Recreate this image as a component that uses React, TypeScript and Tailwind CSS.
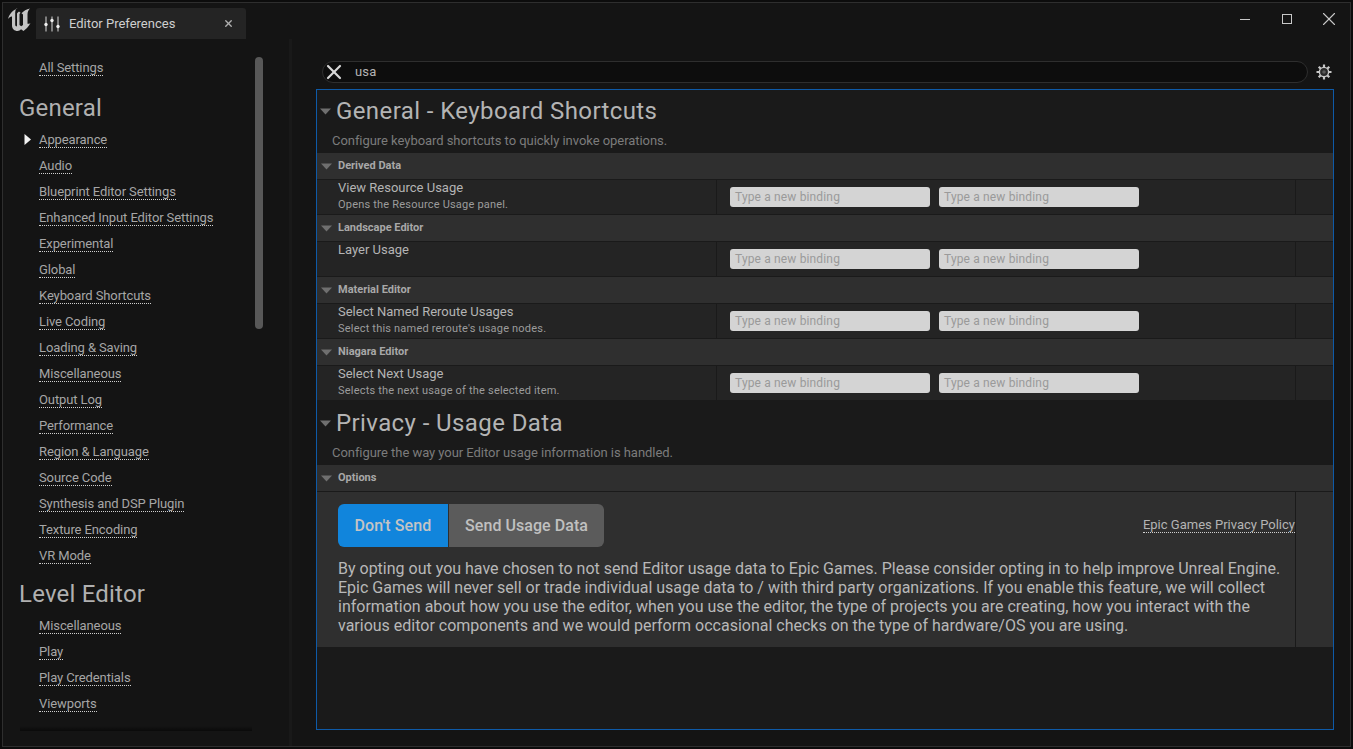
import { X } from 'lucide-react'

const generalItems = [
  'Appearance',
  'Audio',
  'Blueprint Editor Settings',
  'Enhanced Input Editor Settings',
  'Experimental',
  'Global',
  'Keyboard Shortcuts',
  'Live Coding',
  'Loading & Saving',
  'Miscellaneous',
  'Output Log',
  'Performance',
  'Region & Language',
  'Source Code',
  'Synthesis and DSP Plugin',
  'Texture Encoding',
  'VR Mode',
]

const levelItems = ['Miscellaneous', 'Play', 'Play Credentials', 'Viewports']

const shortcuts = [
  { category: 'Derived Data', name: 'View Resource Usage', desc: 'Opens the Resource Usage panel.' },
  { category: 'Landscape Editor', name: 'Layer Usage', desc: '' },
  { category: 'Material Editor', name: 'Select Named Reroute Usages', desc: "Select this named reroute's usage nodes." },
  { category: 'Niagara Editor', name: 'Select Next Usage', desc: 'Selects the next usage of the selected item.' },
]

function Caret() {
  return (
    <svg width="11" height="7" viewBox="0 0 11 7" className="shrink-0">
      <path d="M0 0.5h11L5.5 6.5z" fill="#6f6f6f" />
    </svg>
  )
}

function UnrealLogo() {
  return (
    <svg width="24" height="24" viewBox="7 7.5 24 24" className="shrink-0">
      <path
        fillRule="evenodd"
        d="M17.5 8C13 9.5 9.5 13 8 18.5c1.2-1.5 2.5-2.5 3.5-2.5h.5v9c0 3.3 2.5 5.5 5.5 5.5 1.5 0 2.5-.7 3.5-1.7l2.5 1.7 3.5-3c1.5-1.5 2.7-3.2 3.5-5-1 .8-2 1-3 .8V14c0-2.5.8-4.3 2.5-6-3.5.8-6.5 2.5-8.5 4.7l1.5 1.3v10.5l-1.8 1.3-1.7-1.3V13.5l1-1.2-1.5-1.3c-.9.7-1.6 1.3-2 2v12c0 .7-.5 1.2-1 .8-.5-.3-.8-.8-.8-1.5V12.5c0-1.8.4-3.2 1.3-4.5z"
        fill="#c4c4c4"
      />
    </svg>
  )
}

function SliderIcon() {
  return (
    <svg width="16" height="16" viewBox="0 0 16 16" className="shrink-0">
      <g stroke="#d8d8d8" strokeWidth="1">
        <path d="M2 0.5v15M8 0.5v15M14 0.5v15" />
      </g>
      <circle cx="2" cy="8.5" r="1.7" fill="#f0f0f0" />
      <circle cx="8" cy="4.5" r="1.7" fill="#f0f0f0" />
      <circle cx="14" cy="10.5" r="1.7" fill="#f0f0f0" />
    </svg>
  )
}

function GearIcon() {
  return (
    <svg width="16" height="16" viewBox="0 0 16 16" className="shrink-0">
      <g stroke="#c8c8c8" strokeWidth="2.2">
        <path d="M8 0.5v3M8 12.5v3M0.5 8h3M12.5 8h3M2.7 2.7l2.1 2.1M11.2 11.2l2.1 2.1M2.7 13.3l2.1-2.1M11.2 4.8l2.1-2.1" />
      </g>
      <circle cx="8" cy="8" r="4.6" fill="#2a2a2a" stroke="#c8c8c8" strokeWidth="1.4" />
      <circle cx="8" cy="8" r="1.8" fill="#5a5a5a" />
    </svg>
  )
}

function NavLink({ label }: { label: string }) {
  return (
    <div className="h-[26px] flex items-center pl-[36px] relative">
      {label === 'Appearance' && (
        <svg width="7" height="11" viewBox="0 0 7 11" className="absolute left-[21px] top-[7px]">
          <path d="M0.5 0v11L7 5.5z" fill="#f2f2f2" />
        </svg>
      )}
      <span className="text-[13px] leading-[14px] tracking-[-0.1px] text-[#a6a6a6] border-b border-dotted border-[#d0d0d0]">{label}</span>
    </div>
  )
}

function CategoryBar({ label }: { label: string }) {
  return (
    <div className="h-[27px] bg-[#2f2f2f] border-b border-[#1a1a1a] flex items-center pl-[4px]">
      <Caret />
      <span className="ml-[6px] text-[11px] font-bold text-[#a8a8a8]">{label}</span>
    </div>
  )
}

function BindingInput() {
  return (
    <div className="w-[200px] h-[20px] bg-[#d4d4d4] rounded-[3px] flex items-center px-[5px] text-[12px] tracking-[0.15px] text-[#9a9a9a]">
      Type a new binding
    </div>
  )
}

function ShortcutRow({ name, desc }: { name: string; desc: string }) {
  return (
    <div className="h-[35px] bg-[#242424] border-b border-[#1a1a1a] flex">
      <div className="w-[400px] shrink-0 pl-[21px] border-r border-[#1a1a1a]">
        <div className="text-[13px] leading-[15px] text-[#b4b4b4]">{name}</div>
        {desc && <div className="text-[11px] leading-[15px] tracking-[0.2px] text-[#9c9c9c] mt-[2px]">{desc}</div>}
      </div>
      <div className="w-[579px] shrink-0 flex items-center gap-[9px] pl-[13px] border-r border-[#1a1a1a]">
        <BindingInput />
        <BindingInput />
      </div>
    </div>
  )
}

function SectionHeading({ title, desc, className }: { title: string; desc: string; className?: string }) {
  return (
    <div className={`h-[63px] relative pl-[19px] ${className ?? ''}`}>
      <div className="absolute left-[3px] top-[18px]">
        <Caret />
      </div>
      <div className="text-[24px] leading-[28px] pt-[7px] tracking-[0.4px] text-[#b4b4b4]">{title}</div>
      <div className="text-[13px] leading-[15px] mt-[8px] -ml-[4px] tracking-[-0.05px] text-[#7c7c7c]">{desc}</div>
    </div>
  )
}

export default function App() {
  return (
    <div className="w-[1353px] h-[749px] bg-[#0c0c0c] p-[2px] overflow-hidden font-['Roboto',sans-serif]">
      <div className="w-full h-full bg-[#141414] border border-[#2e2e2e] flex flex-col">
        {/* Title bar */}
        <div className="h-[36px] shrink-0 flex items-start pl-[4px] pt-[5px]">
          <UnrealLogo />
          <div className="ml-[5px] w-[210px] h-[31px] bg-[#242424] rounded-t-[3px] flex items-center pl-[8px]">
            <SliderIcon />
            <span className="ml-[9px] text-[13px] text-[#cfcfcf]">Editor Preferences</span>
            <X size={11} strokeWidth={3} className="ml-[48px] text-[#b0b0b0]" />
          </div>
          <div className="ml-auto flex items-center h-[22px] pr-[10px]">
            <div className="w-[10px] h-px bg-[#c8c8c8] mr-[32px]" />
            <div className="w-[10px] h-[10px] border border-[#c8c8c8] mr-[26px]" />
            <X size={22} strokeWidth={1.2} className="text-[#c8c8c8]" />
          </div>
        </div>

        <div className="flex-1 flex min-h-0">
          {/* Sidebar */}
          <aside className="w-[289px] shrink-0 relative border-r-[3px] border-[#191919]">
            <div className="pt-[16px]">
              <NavLink label="All Settings" />
              <div className="text-[24px] leading-[28px] pl-[16px] mt-[13px] mb-[5px] tracking-[0.2px] text-[#b0b0b0]">General</div>
              {generalItems.map((item) => (
                <NavLink key={item} label={item} />
              ))}
              <div className="text-[24px] leading-[28px] pl-[16px] mt-[11px] mb-[5px] tracking-[0.2px] text-[#b0b0b0]">Level Editor</div>
              {levelItems.map((item) => (
                <NavLink key={item} label={item} />
              ))}
            </div>
            <div className="absolute left-[252px] top-[18px] w-[8px] h-[272px] rounded-[4px] bg-[#585858]" />
            <div className="absolute left-[17px] top-[687px] w-[232px] h-[5px] bg-gradient-to-b from-[#141414] to-[#0a0a0a]" />
          </aside>

          {/* Main */}
          <main className="flex-1 min-w-0 pl-[24px]">
            <div className="flex items-center h-[50px] pt-[15px]">
              <div className="ml-[6px] w-[986px] h-[22px] rounded-full bg-[#0d0d0d] border border-[#2e2e2e] flex items-center">
                <X size={24} strokeWidth={2.2} className="-ml-px text-[#d8d8d8]" />
                <span className="ml-[9px] text-[13px] tracking-[0.2px] text-[#b4b4b4]">usa</span>
              </div>
              <div className="ml-[8px]">
                <GearIcon />
              </div>
            </div>

            <div className="w-[1018px] h-[641px] bg-[#1a1a1a] border border-[#0e5aa8]">
              <SectionHeading title="General - Keyboard Shortcuts" desc="Configure keyboard shortcuts to quickly invoke operations." />
              {shortcuts.map((s) => (
                <div key={s.category}>
                  <CategoryBar label={s.category} />
                  <ShortcutRow name={s.name} desc={s.desc} />
                </div>
              ))}
              <SectionHeading className="mt-px" title="Privacy - Usage Data" desc="Configure the way your Editor usage information is handled." />
              <CategoryBar label="Options" />
              <div className="h-[155px] bg-[#2f2f2f] flex">
                <div className="w-[979px] shrink-0 border-r border-[#1a1a1a] pl-[21px] pt-[12px]">
                  <div className="flex items-center h-[43px]">
                    <div className="w-[110px] h-full bg-[#1185dc] rounded-l-[6px] flex items-center justify-center text-[16px] font-medium tracking-[0.1px] text-[#c4c4c4]">
                      Don't Send
                    </div>
                    <div className="ml-px w-[155px] h-full bg-[#5b5b5b] rounded-r-[6px] flex items-center justify-center text-[16px] font-medium tracking-[0.05px] text-[#c0c0c0]">
                      Send Usage Data
                    </div>
                    <span className="ml-auto text-[13px] leading-[14px] text-[#b4b4b4] border-b border-dotted border-[#d0d0d0]">
                      Epic Games Privacy Policy
                    </span>
                  </div>
                  <p className="mt-[12px] text-[16px] leading-[19px] text-[#b8b8b8] whitespace-nowrap">
                    By opting out you have chosen to not send Editor usage data to Epic Games. Please consider opting in to help improve Unreal Engine.
                    <br />
                    Epic Games will never sell or trade individual usage data to / with third party organizations. If you enable this feature, we will collect
                    <br />
                    information about how you use the editor, when you use the editor, the type of projects you are creating, how you interact with the
                    <br />
                    various editor components and we would perform occasional checks on the type of hardware/OS you are using.
                  </p>
                </div>
              </div>
            </div>
          </main>
        </div>
      </div>
    </div>
  )
}
